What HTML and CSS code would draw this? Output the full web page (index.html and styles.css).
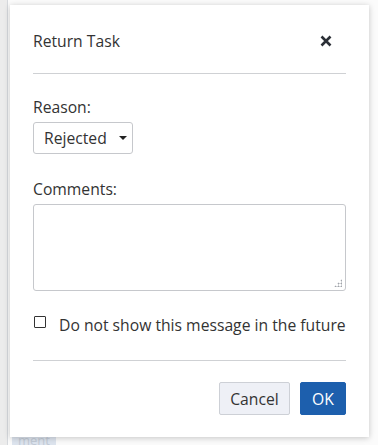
FILE: index.html
```html
<!DOCTYPE html>
<html lang="en">
<head>
    <meta charset="UTF-8">
    <meta name="viewport" content="width=device-width, initial-scale=1.0">
    <title>Return Task</title>
    <link rel="stylesheet" href="styles.css">
</head>
<body>
    <!-- page behind the dialog -->
    <div class="page">
        <div class="page-tag">ment</div>
    </div>

    <div class="dialog">
        <div class="dialog-header">
            <span class="dialog-title">Return Task</span>
            <button class="close-btn" aria-label="Close">
                <svg width="12" height="12" viewBox="0 0 12 12">
                    <path d="M1.5 1.5 L10.5 10.5 M10.5 1.5 L1.5 10.5" stroke="#2b2f36" stroke-width="2.6" stroke-linecap="butt"/>
                </svg>
            </button>
        </div>
        <hr class="divider">

        <label class="field-label" for="reasonSelect">Reason:</label>
        <div class="select-wrap">
            <select id="reasonSelect" class="reason-select">
                <option>Rejected</option>
                <option>Incomplete</option>
            </select>
        </div>

        <label class="field-label comments-label" for="comments">Comments:</label>
        <div class="textarea-wrap">
            <textarea id="comments" class="comments"></textarea>
            <span class="grip"></span>
        </div>

        <label class="check-row">
            <input type="checkbox" class="check">
            <span>Do not show this message in the future</span>
        </label>

        <hr class="divider footer-divider">

        <div class="dialog-footer">
            <button class="btn btn-cancel">Cancel</button>
            <button class="btn btn-ok">OK</button>
        </div>
    </div>
</body>
</html>
```

FILE: styles.css
```css
body {
    margin: 0;
    font-family: 'Open Sans', 'Noto Sans', sans-serif;
    background-color: #ececec;
    color: #333;
    overflow: hidden;
}

.page {
    height: 445px;
    margin-left: 7px;
    border-left: 1px solid #d6d9dd;
    background-color: #fbfbfb;
    position: relative;
}

.page-tag {
    position: absolute;
    left: 4px;
    top: 436px;
    padding: 0 6px;
    background-color: #dde4ee;
    color: #c3cbd6;
    font-size: 13px;
    line-height: 9px;
    height: 9px;
    overflow: hidden;
}

.dialog {
    position: absolute;
    left: 10px;
    top: 5px;
    width: 313px;
    height: 432px;
    padding: 0 23px;
    background: #fff;
    box-shadow: 0px 1px 6px rgba(0, 0, 0, 0.22);
}

.dialog-header {
    display: flex;
    justify-content: space-between;
    align-items: center;
    padding-top: 26px;
    height: 20px;
}

.dialog-title {
    font-size: 15.7px;
    line-height: 20px;
}

.close-btn {
    border: none;
    background: none;
    padding: 0;
    margin-right: 14px;
    width: 12px;
    height: 12px;
    display: flex;
    cursor: pointer;
}

.divider {
    border: none;
    border-top: 1px solid #cfd1d4;
    margin: 22px 0 0;
}

.field-label {
    display: block;
    font-size: 15.7px;
    line-height: 20px;
    margin-top: 23px;
}

.comments-label {
    margin-top: 25px;
}

.select-wrap {
    position: relative;
    width: 100px;
    margin-top: 5px;
}

.select-wrap::after {
    content: "";
    position: absolute;
    right: 6px;
    top: 14px;
    border-left: 4px solid transparent;
    border-right: 4px solid transparent;
    border-top: 4.5px solid #222;
}

.reason-select {
    appearance: none;
    -webkit-appearance: none;
    width: 100px;
    height: 32px;
    padding: 0 0 0 10px;
    border: 1px solid #c6c8cc;
    border-radius: 3px;
    background: #fff;
    font-family: inherit;
    font-size: 15.7px;
    color: #333;
}

.textarea-wrap {
    position: relative;
    margin-top: 5px;
    height: 87px;
}

.comments {
    box-sizing: border-box;
    width: 100%;
    height: 87px;
    border: 1px solid #c6c8cc;
    border-radius: 3px;
    resize: none;
    display: block;
    font-family: inherit;
}

.grip {
    position: absolute;
    right: 4px;
    bottom: 4px;
    width: 8px;
    height: 8px;
    background:
        radial-gradient(circle, #a0a4aa 0.9px, transparent 1.1px) 0 0 / 3px 3px;
    clip-path: polygon(100% 0, 100% 100%, 0 100%);
}

.check-row {
    display: flex;
    align-items: center;
    margin-top: 24px;
    font-size: 15.7px;
    line-height: 20px;
}

.check {
    appearance: none;
    -webkit-appearance: none;
    width: 12px;
    height: 12px;
    margin: 0 13px 6px 1px;
    border: 1px solid #333;
    border-radius: 1px;
    background: #fff;
}

.footer-divider {
    margin-top: 25px;
}

.dialog-footer {
    display: flex;
    justify-content: flex-end;
    gap: 10px;
    margin-top: 21px;
}

.btn {
    height: 33px;
    padding: 0;
    border-radius: 2px;
    font-family: inherit;
    font-size: 15.7px;
    cursor: pointer;
}

.btn-cancel {
    width: 71px;
    background-color: #eef0f6;
    border: 1px solid #cdd0d6;
    color: #333;
}

.btn-ok {
    width: 46px;
    background-color: #1d5fad;
    border: 1px solid #1d5fad;
    color: white;
}
```
